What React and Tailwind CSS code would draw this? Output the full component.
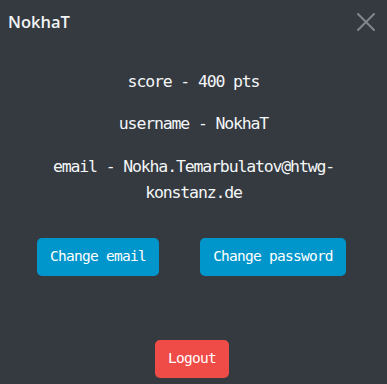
export default function App() {
  const mono = { fontFamily: '"DejaVu Sans Mono", "Liberation Mono", monospace' };
  return (
    <div className="w-[387px] h-[384px] bg-[#343a40] flex flex-col text-[#f4f6f8]" style={mono}>
      <div className="h-[44px] flex items-center justify-between pl-2 pr-3">
        <span className="text-[16.5px] font-semibold text-[#f1f3f5]" style={{ fontFamily: '"Open Sans", "Noto Sans", sans-serif' }}>
          NokhaT
        </span>
        <svg width="18" height="18" viewBox="0 0 18 18" className="block">
          <path d="M1 1 L17 17 M17 1 L1 17" stroke="#82868a" strokeWidth="2" strokeLinecap="square" />
        </svg>
      </div>
      <div className="flex flex-col items-center text-center text-[16.5px] tracking-[-1.15px] leading-[26px]">
        <p className="mt-[25px]">score - 400 pts</p>
        <p className="mt-[16px]">username - NokhaT</p>
        <p className="mt-[17px]">
          email - Nokha.Temarbulatov@htwg-
          <br />
          konstanz.de
        </p>
      </div>
      <div className="flex mt-[32px] pl-[37px] gap-[41px]">
        <button className="h-[38px] w-[122px] rounded-[5px] bg-[#0096cc] text-white text-[14.5px] tracking-[-0.75px] flex items-center justify-center">
          Change email
        </button>
        <button className="h-[38px] w-[146px] rounded-[5px] bg-[#0096cc] text-white text-[14.5px] tracking-[-0.75px] flex items-center justify-center">
          Change password
        </button>
      </div>
      <div className="flex mt-[64px] pl-[155px]">
        <button className="h-[38px] w-[74px] rounded-[5px] bg-[#ef4b47] text-white text-[14.5px] tracking-[-0.75px] flex items-center justify-center">
          Logout
        </button>
      </div>
    </div>
  );
}
